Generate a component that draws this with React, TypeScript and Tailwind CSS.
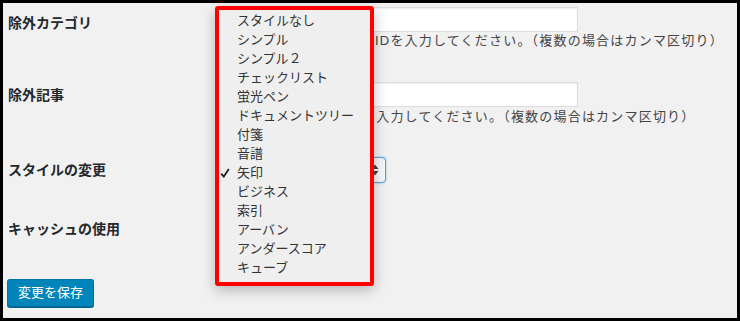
const FONT = "font-['Liberation_Sans','Noto_Sans_CJK_JP',sans-serif]";

const STYLES = [
  "スタイルなし",
  "シンプル",
  "シンプル２",
  "チェックリスト",
  "蛍光ペン",
  "ドキュメントツリー",
  "付箋",
  "音譜",
  "矢印",
  "ビジネス",
  "索引",
  "アーバン",
  "アンダースコア",
  "キューブ",
];

function Label({ children, top }: { children: string; top: string }) {
  return (
    <div className={`w-[225px] shrink-0 ${top} text-[14px] leading-[20px] font-bold text-[#23282d]`}>
      {children}
    </div>
  );
}

function StyleMenu() {
  return (
    <div className="absolute left-[212px] top-[3px] w-[159px] h-[280px] rounded-[3px] border-4 border-[#ff0000] bg-[#efefef] pt-[1px] shadow-[0_4px_14px_rgba(0,0,0,0.25)]">
      {STYLES.map((s) => (
        <div key={s} className="relative h-[19px] pl-[18px] text-[13px] leading-[19px] text-[#333]">
          {s === "矢印" && (
            <svg viewBox="0 0 10 10" className="absolute left-[1px] top-[5px] h-[10px] w-[10px]">
              <path d="M1.2 5.6 L3.8 8.6 L8.8 1" fill="none" stroke="#222" strokeWidth="1.8" />
            </svg>
          )}
          {s}
        </div>
      ))}
    </div>
  );
}

export default function App() {
  return (
    <div className={`w-[740px] h-[321px] bg-black p-[3px] ${FONT}`}>
      <div className="relative h-full w-full overflow-hidden bg-[#f1f1f1] pl-[5px]">
        <div className="mt-[4px] flex">
          <Label top="mt-[6px]">除外カテゴリ</Label>
          <div>
            <div className="h-[25px] w-[345px] border border-[#ddd] bg-white shadow-[inset_0_1px_2px_rgba(0,0,0,0.07)]" />
            <div className="whitespace-nowrap text-[13px] leading-[18px] tracking-[1.2px] text-[#444]">
              除外するカテゴリーのIDを入力してください。（複数の場合はカンマ区切り）
            </div>
          </div>
        </div>

        <div className="mt-[32px] flex">
          <Label top="mt-[3px]">除外記事</Label>
          <div>
            <div className="h-[25px] w-[345px] border border-[#ddd] bg-white shadow-[inset_0_1px_2px_rgba(0,0,0,0.07)]" />
            <div className="mt-[1px] whitespace-nowrap text-[13px] leading-[18px] tracking-[1.2px] text-[#444]">
              除外したい記事のIDを入力してください。（複数の場合はカンマ区切り）
            </div>
          </div>
        </div>

        <div className="mt-[31px] flex">
          <Label top="mt-[3px]">スタイルの変更</Label>
          <div className="flex h-[26px] w-[153px] items-center justify-between rounded-[4px] border border-[#5b9dd9] bg-[#f7f7f7] px-[6px] text-[13px] text-[#333] shadow-[0_0_2px_rgba(30,140,190,0.5)]">
            <span>矢印</span>
            <svg viewBox="0 0 8 12" className="h-[12px] w-[8px]">
              <path d="M4 0.5 L7.5 5 L0.5 5 Z" fill="#444" />
              <path d="M4 11.5 L7.5 7 L0.5 7 Z" fill="#444" />
            </svg>
          </div>
        </div>

        <div className="mt-[36px] flex">
          <Label top="mt-0">キャッシュの使用</Label>
          <div className="h-[16px] w-[16px] border border-[#b4b9be] bg-white" />
        </div>

        <button className="ml-[-1px] mt-[40px] h-[28px] rounded-[3px] border border-[#0073aa] border-b-[#006799] bg-[#0085ba] px-[10px] text-[13px] leading-[26px] text-white shadow-[0_1px_0_#006799]">
          変更を保存
        </button>

        <StyleMenu />
      </div>
    </div>
  );
}
